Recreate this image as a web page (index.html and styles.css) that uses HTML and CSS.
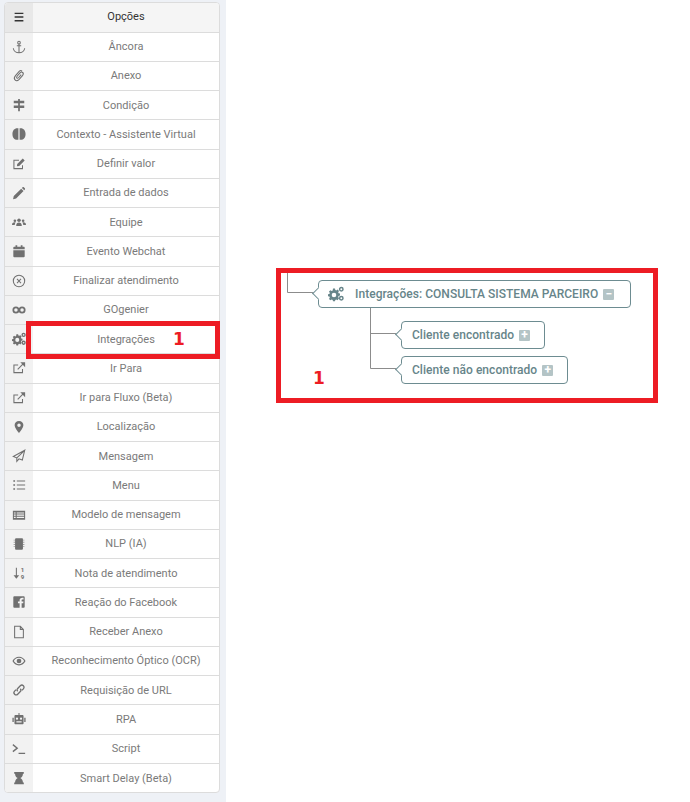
FILE: index.html
```html
<!DOCTYPE html>
<html lang="en">
<head>
    <meta charset="UTF-8">
    <title>Opções</title>
    <link rel="stylesheet" href="styles.css">
</head>
<body>
    <div class="page">
        <aside class="sidebar">
            <ul class="menu">
                <li class="row head"><span class="ic"><svg viewBox="0 0 16 16"><path class="f" d="M3 3h10v1.600H3zM3 7.200h10v1.600H3zM3 11.400h10V13H3z"/></svg></span><span class="lb">Opções</span></li>
                <li class="row"><span class="ic"><svg viewBox="0 0 16 16"><circle class="s" cx="8" cy="3" r="1.500"/><path class="s" d="M8 4.500V14.500M5.500 6.500h5M1.500 9.500c.3 3 3.300 5 6.500 5s6.200-2 6.500-5"/></svg></span><span class="lb">Âncora</span></li>
                <li class="row"><span class="ic"><svg viewBox="0 0 16 16"><path class="s" d="M11.500 2.500c-1-1-2.300-.8-3.300.2L4 7.500c-1.500 1.700-1.700 3.700-.5 5s3.200 1 4.700-.6l3.800-4.400c1-1.200 1.100-2.700.2-3.500s-2.100-.5-3 .5L5.800 8.300c-.6.800-.7 1.500-.2 2s1.200.3 1.800-.3l3.100-3.600"/></svg></span><span class="lb">Anexo</span></li>
                <li class="row"><span class="ic"><svg viewBox="0 0 16 16"><path class="f" d="M7 1h2v2h5v3H9v2.500h5v3H9V15H7v-3.500H2v-3h5V6H2V3h5z"/></svg></span><span class="lb">Condição</span></li>
                <li class="row"><span class="ic"><svg viewBox="0 0 16 16"><path class="f" d="M7.300 1.500v13C3.500 15.400.5 12.700.5 8s3-7.400 6.800-6.500zM8.700 1.500v13c3.800.9 6.800-1.800 6.800-6.500s-3-7.400-6.800-6.500z"/></svg></span><span class="lb">Contexto - Assistente Virtual</span></li>
                <li class="row"><span class="ic"><svg viewBox="0 0 16 16"><path class="s" d="M12 9.500V13.300H2.200V3.700H8"/><path class="f" d="M6 8l6.300-6.300 2.200 2.200L8.200 10.200 5.600 10.700z"/></svg></span><span class="lb">Definir valor</span></li>
                <li class="row"><span class="ic"><svg viewBox="0 0 16 16"><path class="f" d="M2 11.500L10.500 3l2.700 2.700-8.500 8.500-3.500.8zM11.300 2.200l.8-.7c.5-.4 1-.4 1.400 0l1.200 1.200c.4.400.4.900 0 1.400l-.7.800z"/></svg></span><span class="lb">Entrada de dados</span></li>
                <li class="row"><span class="ic"><svg viewBox="0 0 16 16"><circle class="f" cx="8" cy="6" r="2"/><circle class="f" cx="3.300" cy="6.500" r="1.500"/><circle class="f" cx="12.700" cy="6.500" r="1.500"/><path class="f" d="M4.800 12.500c0-2.600 1.300-3.800 3.200-3.800s3.200 1.200 3.200 3.800zM0 11.300c0-1.900.9-2.900 3-2.900.5 0 .9.100 1.200.2-.6.700-1 1.600-1.100 2.700zM16 11.300c0-1.900-.9-2.900-3-2.900-.5 0-.9.100-1.200.2.600.7 1 1.600 1.100 2.700z"/></svg></span><span class="lb">Equipe</span></li>
                <li class="row"><span class="ic"><svg viewBox="0 0 16 16"><path class="f" d="M4 1.500h2V3h4V1.500h2V3h1.500c.5 0 1 .4 1 1v2h-13V4c0-.6.5-1 1-1H4zM1.500 7h13v7c0 .6-.5 1-1 1h-11c-.5 0-1-.4-1-1z"/></svg></span><span class="lb">Evento Webchat</span></li>
                <li class="row"><span class="ic"><svg viewBox="0 0 16 16"><circle class="s" cx="8" cy="8" r="6.500"/><path class="s" d="M5.700 5.700l4.600 4.600M10.300 5.700l-4.600 4.600"/></svg></span><span class="lb">Finalizar atendimento</span></li>
                <li class="row"><span class="ic"><svg viewBox="0 0 16 16"><circle class="s thick" cx="4.500" cy="8" r="3"/><circle class="s thick" cx="11.500" cy="8" r="3"/></svg></span><span class="lb">GOgenier</span></li>
                <li class="row"><span class="ic"><svg viewBox="0 0 16 16"><use href="#cogs"/></svg></span><span class="lb">Integrações</span></li>
                <li class="row"><span class="ic"><svg viewBox="0 0 16 16"><path class="s" d="M12 9v4.300H2.200V4.500H7"/><path class="s" d="M6.500 9.500L13 3"/><path class="f" d="M9.500 1.500h5.500V7z"/></svg></span><span class="lb">Ir Para</span></li>
                <li class="row"><span class="ic"><svg viewBox="0 0 16 16"><path class="s" d="M12 9v4.300H2.200V4.500H7"/><path class="s" d="M6.500 9.500L13 3"/><path class="f" d="M9.500 1.500h5.500V7z"/></svg></span><span class="lb">Ir para Fluxo (Beta)</span></li>
                <li class="row"><span class="ic"><svg viewBox="0 0 16 16"><path class="f" fill-rule="evenodd" d="M8 1c3 0 5 2.100 5 4.800C13 9 9.500 13 8 15 6.500 13 3 9 3 5.800 3 3.100 5 1 8 1zm0 3a2 2 0 1 0 0 4 2 2 0 0 0 0-4z"/></svg></span><span class="lb">Localização</span></li>
                <li class="row"><span class="ic"><svg viewBox="0 0 16 16"><path class="s" d="M14.500 1.500L1.500 8.500l4 1.700zM14.500 1.500l-9 8.700V14l2.500-2.800 3.800 1.500z"/></svg></span><span class="lb">Mensagem</span></li>
                <li class="row"><span class="ic"><svg viewBox="0 0 16 16"><path class="f" d="M5.500 2.800H15V4H5.500zM5.500 7.400H15v1.200H5.500zM5.500 12H15v1.200H5.500zM1.500 2.500h2v1.800h-2zM1.500 7.100h2v1.800h-2zM1.500 11.700h2v1.800h-2z"/></svg></span><span class="lb">Menu</span></li>
                <li class="row"><span class="ic"><svg viewBox="0 0 16 16"><path class="f" fill-rule="evenodd" d="M1 3h14v10.500H1zm1.200 2v1.400h2V5zm0 2.500v1.400h2V7.500zm0 2.500v1.400h2V10zm3.200-5v1.400h8.400V5zm0 2.500v1.400h8.400V7.500zm0 2.500v1.400h8.400V10z"/></svg></span><span class="lb">Modelo de mensagem</span></li>
                <li class="row"><span class="ic"><svg viewBox="0 0 16 16"><path class="f" d="M4.500 1.500h7c.5 0 1 .4 1 1v11c0 .6-.5 1-1 1h-7c-.5 0-1-.4-1-1v-11c0-.6.5-1 1-1zM2 3h1v1H2zM2 5.500h1v1H2zM2 8h1v1H2zM2 10.500h1v1H2zM13 3h1v1h-1zM13 5.500h1v1h-1zM13 8h1v1h-1zM13 10.500h1v1h-1z"/></svg></span><span class="lb">NLP (IA)</span></li>
                <li class="row"><span class="ic"><svg viewBox="0 0 16 16"><path class="s" d="M5 2v11"/><path class="f" d="M1.800 10.500h6.400L5 14.500z"/><text class="digit" x="10" y="7">1</text><text class="digit" x="10" y="14.500">9</text></svg></span><span class="lb">Nota de atendimento</span></li>
                <li class="row"><span class="ic"><svg viewBox="0 0 16 16"><path class="f" d="M2.500 1.500h11c.6 0 1 .4 1 1v11c0 .6-.4 1-1 1H11V9.500h1.800l.3-2.200H11V6c0-.6.200-1 1-1h1.200V3.100c-.4 0-1-.1-1.600-.1-1.700 0-2.900 1-2.900 2.800v1.500H6.800v2.200h1.900v5h-6.200c-.6 0-1-.4-1-1v-11c0-.6.400-1 1-1z"/></svg></span><span class="lb">Reação do Facebook</span></li>
                <li class="row"><span class="ic"><svg viewBox="0 0 16 16"><path class="s" d="M3 1.500h6.500L13 5v9.500H3zM9.500 1.500V5H13"/></svg></span><span class="lb">Receber Anexo</span></li>
                <li class="row"><span class="ic"><svg viewBox="0 0 16 16"><path class="f" fill-rule="evenodd" d="M8 3c3.200 0 6 2 7.500 5-1.500 3-4.300 5-7.500 5S2 11 .5 8C2 5 4.800 3 8 3zm0 1.400C5.500 4.400 3.400 5.800 2.100 8c1.300 2.200 3.400 3.600 5.900 3.600s4.600-1.400 5.900-3.600C12.600 5.800 10.500 4.400 8 4.400zM8 5.300a2.700 2.700 0 1 1 0 5.400 2.700 2.700 0 0 1 0-5.400z"/></svg></span><span class="lb">Reconhecimento Óptico (OCR)</span></li>
                <li class="row"><span class="ic"><svg viewBox="0 0 16 16"><path class="s mid" d="M6.500 9.500c-1-1-1-2.300 0-3.300l3-3c1-1 2.500-1 3.500 0s1 2.500 0 3.500l-1.500 1.500M9.500 6.500c1 1 1 2.300 0 3.300l-3 3c-1 1-2.500 1-3.500 0s-1-2.500 0-3.500l1.500-1.500"/></svg></span><span class="lb">Requisição de URL</span></li>
                <li class="row"><span class="ic"><svg viewBox="0 0 16 16"><path class="f" fill-rule="evenodd" d="M7.400 1h1.200v2.500h3.400c.7 0 1.200.5 1.200 1.200v8.100c0 .7-.5 1.200-1.200 1.200H4c-.7 0-1.200-.5-1.200-1.200V4.700c0-.7.500-1.200 1.200-1.200h3.400zM5.700 6.300a1.300 1.300 0 1 0 0 2.600 1.300 1.300 0 0 0 0-2.600zm4.600 0a1.300 1.300 0 1 0 0 2.600 1.300 1.300 0 0 0 0-2.600zM5 10.700v1.300h6v-1.300z"/><path class="f" d="M.5 6.500h1.500v5H.5zM14 6.500h1.500v5H14z"/></svg></span><span class="lb">RPA</span></li>
                <li class="row"><span class="ic"><svg viewBox="0 0 16 16"><path class="s mid" d="M1 3l5 4-5 4M7.500 13H15"/></svg></span><span class="lb">Script</span></li>
                <li class="row"><span class="ic"><svg viewBox="0 0 16 16"><path class="f" d="M2.500 1h11v2h-1c0 2.500-1.300 4-3 5 1.700 1 3 2.500 3 5h1v2h-11v-2h1c0-2.500 1.300-4 3-5-1.700-1-3-2.500-3-5h-1z"/></svg></span><span class="lb">Smart Delay (Beta)</span></li>
            </ul>
        </aside>
        <main class="canvas">
            <svg class="wires" viewBox="0 0 464 802">
                <path d="M61.500 272v20.500H88M144.500 308v60.500H170M144.500 333.500H170"/>
            </svg>
            <div class="node node-main">
                <svg class="node-ic" viewBox="0 0 16 16"><use href="#cogs"/></svg>
                <span>Integrações: CONSULTA SISTEMA PARCEIRO</span>
                <i class="toggle">−</i>
            </div>
            <div class="node node-a"><span>Cliente encontrado</span><i class="toggle">+</i></div>
            <div class="node node-b"><span>Cliente não encontrado</span><i class="toggle">+</i></div>
            <div class="mark mark-tree"></div>
            <b class="num num-tree">1</b>
        </main>
        <div class="mark mark-row"></div>
        <b class="num num-row">1</b>
    </div>
    <svg class="defs" width="0" height="0">
        <symbol id="cogs" viewBox="0 0 16 16">
            <path class="f" fill-rule="evenodd" d="M5 2.500h2l.3 1.500 1 .4L9.600 3.600 11 5l-.8 1.300.4 1 1.400.3v2l-1.400.3-.4 1 .8 1.300L9.600 14.300 8.300 13.500l-1 .4L7 15.300H5l-.3-1.400-1-.4-1.300.8L1 12.900l.8-1.300-.4-1L0 10.300v-2l1.400-.3.4-1L1 5.600 2.400 4.200l1.300.8 1-.4zM6 6.700a2.300 2.300 0 1 0 0 4.600 2.300 2.300 0 0 0 0-4.600z"/>
            <circle class="s mid" cx="13.300" cy="3.300" r="1.700"/>
            <circle class="s mid" cx="13.300" cy="12.300" r="1.700"/>
        </symbol>
    </svg>
</body>
</html>
```

FILE: styles.css
```css
html, body {
    margin: 0;
    padding: 0;
    background: #fff;
}
body {
    font-family: Roboto, "Liberation Sans", sans-serif;
}
.page {
    position: relative;
    display: flex;
    width: 690px;
    height: 802px;
    overflow: hidden;
}
.sidebar {
    flex: 0 0 226px;
    box-sizing: border-box;
    padding: 2.25px 6px 0 4px;
    background-color: #eef1f6;
}
.menu {
    display: grid;
    grid-auto-rows: 29.25px;
    box-sizing: border-box;
    height: 791px;
    margin: 0;
    padding: 0;
    list-style: none;
    background: #fff;
    border: 1px solid #dcdcdc;
    border-radius: 4px;
    overflow: hidden;
}
.row {
    display: flex;
    align-items: center;
    min-height: 0;
    border-bottom: 1px solid #dcdcdc;
    font-size: 11px;
    color: #7a7a7a;
}
.row:last-child {
    border-bottom: none;
}
.ic {
    display: flex;
    align-items: center;
    justify-content: center;
    box-sizing: border-box;
    flex: 0 0 28px;
    align-self: stretch;
    padding-right: 1px;
    background-color: #f2f2f2;
    color: #707070;
}
.ic svg {
    width: 14px;
    height: 14px;
}
.lb {
    flex: 1;
    text-align: center;
}
.head {
    background-color: #f5f5f5;
    color: #333;
}
.head .lb {
    padding-bottom: 2px;
}
.head .ic {
    padding-right: 0;
    background-color: #e8e8e8;
    color: #333;
}
.f {
    fill: currentColor;
}
.s {
    fill: none;
    stroke: currentColor;
    stroke-width: 1.2;
}
.mid {
    stroke-width: 1.5;
}
.thick {
    stroke-width: 2;
}
.digit {
    font-family: Roboto, sans-serif;
    font-size: 7px;
    font-weight: 700;
    fill: currentColor;
}
.canvas {
    position: relative;
    flex: 1;
}
.wires {
    position: absolute;
    left: 0;
    top: 0;
    width: 464px;
    height: 802px;
}
.wires path {
    fill: none;
    stroke: #8c8c8c;
    stroke-width: 1;
}
.node {
    position: absolute;
    display: flex;
    align-items: center;
    box-sizing: border-box;
    height: 28px;
    padding-left: 10px;
    background: #fff;
    border: 1px solid #6d8c91;
    border-radius: 4px;
    font-size: 12px;
    font-weight: 500;
    letter-spacing: 0.04px;
    color: #67858a;
    white-space: nowrap;
}
.node::before {
    content: "";
    position: absolute;
    left: -5px;
    top: 8px;
    width: 8px;
    height: 8px;
    background: #fff;
    border-left: 1px solid #6d8c91;
    border-bottom: 1px solid #6d8c91;
    transform: rotate(45deg);
}
.node-main {
    left: 92px;
    top: 280px;
    width: 313px;
}
.node-a {
    left: 175px;
    top: 321px;
    width: 144px;
}
.node-b {
    left: 175px;
    top: 356px;
    width: 167px;
}
.node-ic {
    width: 16px;
    height: 16px;
    margin-right: 11px;
    margin-left: -1px;
}
.toggle {
    display: inline-block;
    width: 11px;
    height: 11px;
    margin-left: 5px;
    border-radius: 1px;
    background-color: #b4c4c6;
    color: #fff;
    font-size: 12px;
    font-style: normal;
    font-weight: 700;
    line-height: 11px;
    text-align: center;
}
.mark {
    position: absolute;
    box-sizing: border-box;
    border: 5px solid #ed1c24;
}
.mark-row {
    left: 26px;
    top: 321px;
    width: 194px;
    height: 38px;
}
.mark-tree {
    left: 50px;
    top: 268px;
    width: 382px;
    height: 135px;
}
.num {
    position: absolute;
    font-family: "DejaVu Sans", sans-serif;
    font-size: 17px;
    font-weight: 700;
    line-height: 20px;
    color: #ed1c24;
}
.num-row {
    left: 173px;
    top: 329px;
}
.num-tree {
    left: 87px;
    top: 368px;
}
.defs {
    position: absolute;
}
```
